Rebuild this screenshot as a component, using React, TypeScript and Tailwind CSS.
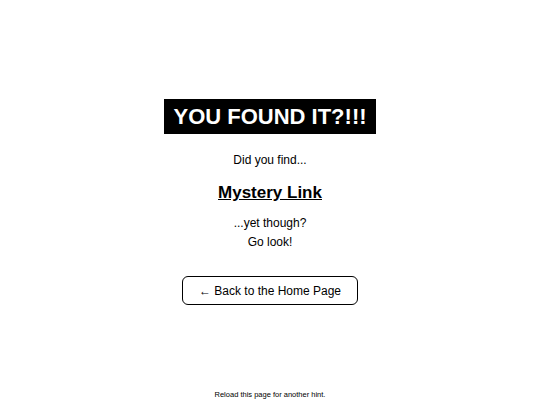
export default function App() {
  return (
    <div
      className="relative flex h-[405px] w-[540px] flex-col items-center bg-white text-black"
      style={{ fontFamily: '"Liberation Sans", Arial, sans-serif' }}
    >
      <div className="mt-[99px] flex h-[35px] w-[212px] items-center justify-center bg-black text-[22px] font-bold leading-[35px] text-white">
        YOU FOUND IT?!!!
      </div>
      <p className="mt-[19px] text-[12px] leading-[14px]">Did you find...</p>
      <a href="#" className="mt-[16px] text-[17px] font-bold leading-[20px] underline">
        Mystery Link
      </a>
      <p className="mt-[11px] text-[12px] leading-[19px]">...yet though?</p>
      <p className="text-[12px] leading-[19px]">Go look!</p>
      <button className="mt-[24px] flex h-[29px] w-[176px] items-center justify-center rounded-[6px] border-[1.5px] border-black bg-white text-[12px]">
        ← Back to the Home Page
      </button>
      <p className="absolute bottom-[5px] text-[7.5px] leading-[10px]">Reload this page for another hint.</p>
    </div>
  );
}
